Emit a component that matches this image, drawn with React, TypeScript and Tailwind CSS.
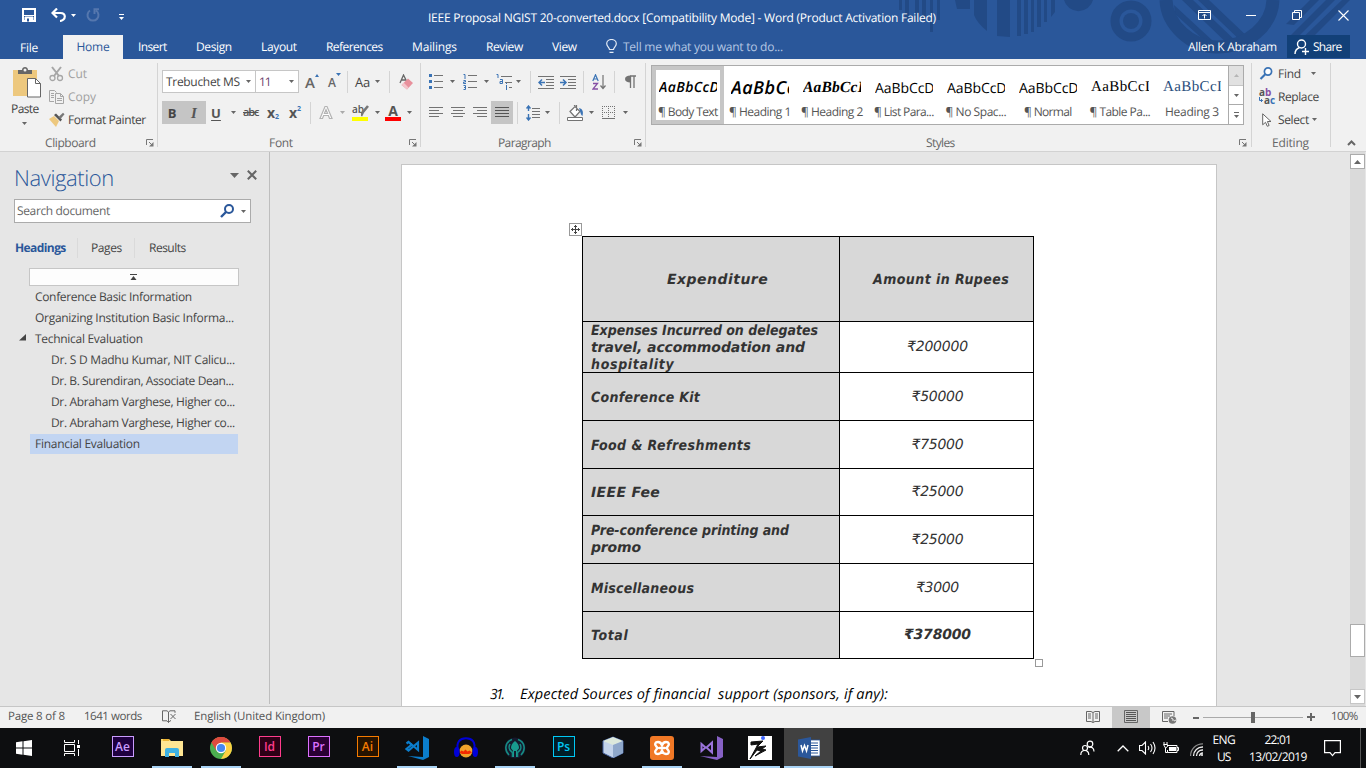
import { useLayoutEffect, useRef, useState } from "react";
import type { ReactNode } from "react";

/* Text run tracked so that it fills exactly `w` pixels. */
function T({ w, c = "", children }: { w: number; c?: string; children: string }) {
  const ref = useRef<HTMLSpanElement>(null);
  const [ls, setLs] = useState(0);
  useLayoutEffect(() => {
    const el = ref.current;
    if (!el) return;
    el.style.letterSpacing = "0px";
    const natural = el.getBoundingClientRect().width;
    const next = (w - natural) / Math.max(1, children.length - 0.5);
    el.style.letterSpacing = next + "px";
    setLs(next);
  }, [w, children]);
  return (
    <span className={"block shrink-0 whitespace-pre " + c} style={{ width: w }}>
      <span ref={ref} className="inline-block align-top [text-rendering:geometricPrecision]" style={{ letterSpacing: ls }}>
        {children}
      </span>
    </span>
  );
}

function Svg({ w, h, c = "", children }: { w: number; h: number; c?: string; children: ReactNode }) {
  return (
    <svg width={w} height={h} viewBox={`0 0 ${w} ${h}`} className={"block shrink-0 " + c} fill="none">
      {children}
    </svg>
  );
}

const Arrow = ({ c = "" }: { c?: string }) => (
  <Svg w={5} h={3} c={c}>
    <path d="M0 0h5L2.5 3z" fill="#666" />
  </Svg>
);

const Sep = ({ c = "" }: { c?: string }) => <div className={"h-[22px] w-px shrink-0 bg-[#d4d4d4] " + c} />;

const Launcher = ({ c = "" }: { c?: string }) => (
  <Svg w={8} h={8} c={c}>
    <path d="M.5 6V.5H7M3 3l3 3" stroke="#777" />
    <path d="M7.5 3v4.5H3z" fill="#777" />
  </Svg>
);

/* ---------- Title bar ---------- */

function Decor() {
  return (
    <svg width={470} height={59} viewBox="-34 0 470 59" className="absolute right-0 top-0 block" fill="none">
      <g fill="#224a86">
        <path d="M-31 0h3v10h-3zM-25 0h4v20h-4zM-15 0h4v20h-4zM-8 0h4v20h-4z" />
        <rect x="0" y="0" width="3" height="32" />
        <rect x="7" y="0" width="3" height="20" />
        <path d="M25 0h15v9H27zM44 0h13v31Q47 23 44 15zM67 0h13v37l-13-1zM87 0h4v36h-4zM94 0h4v34h-4zM101 0h3v32h-3zM107 0h4v27h-4zM114 0h3v22h-3zM121 0h4v12l-4 5zM134 0h29a15 15 0 0 1-29 0z" />
        <circle cx="201" cy="21" r="8" />
        <path d="M244 5l52 48h-8L245 14zM252 0h11l49 47-7 4zM268 0h11l42 40-6 5zM380 0h9l-25 25-8-1zM396 0h9l-36 36h-9zM412 0h8l-49 49h-10z" />
      </g>
      <circle cx="201" cy="21" r="16" stroke="#224a86" strokeWidth="9" />
      <path d="M236 0c1 25 25 47 51 47 31 0 55-22 56-47" stroke="#224a86" strokeWidth="13" />
    </svg>
  );
}

function TitleBar() {
  return (
    <div className="flex h-[35px] items-center text-[12px] text-white">
      <Svg w={14} h={14} c="ml-[22px] -mt-[5px]">
        <path d="M1 1h12v12H1z" stroke="#fff" strokeWidth="2" />
        <path d="M2 7.5h10M3 9h8v5H3z" stroke="#fff" strokeWidth="1" />
        <path d="M3 9h8v4H3z" fill="#fff" />
        <path d="M5 10.500h2v3H5z" fill="#2a579a" />
      </Svg>
      <Svg w={15} h={14} c="ml-[15px] -mt-[5px]">
        <path d="M6 .5L1.500 5 6 9.500M2 5h7.500c3 0 4.300 1.800 4.300 3.600 0 2.200-2 4.200-4.800 4.400" stroke="#fff" strokeWidth="2.200" />
      </Svg>
      <Svg w={5} h={3} c="ml-[5px] -mt-[5px]"><path d="M0 0h5L2.500 3z" fill="#fff" /></Svg>
      <Svg w={14} h={14} c="ml-[10px] -mt-[5px]">
        <path d="M4 2.500A5.500 5.500 0 1 0 10 2.500M8.500 6V1.200H13" stroke="#5577ae" strokeWidth="2" />
      </Svg>
      <Svg w={5} h={6} c="ml-[19px] -mt-[2px]"><path d="M0 .5h5" stroke="#fff" /><path d="M0 3h5L2.500 6z" fill="#fff" /></Svg>
      <T w={508} c="ml-[304px]">IEEE Proposal NGIST 20-converted.docx [Compatibility Mode] - Word (Product Activation Failed)</T>
      <Svg w={13} h={10} c="ml-[262px] -mt-[5px]">
        <path d="M.5.5h12v9H.5zM.5 2.500h12M6.500 8.500v-4M4.500 6l2-2 2 2" stroke="#fff" />
      </Svg>
      <Svg w={10} h={2} c="ml-[35px] -mt-[4px]"><path d="M0 .5h10" stroke="#fff" /></Svg>
      <Svg w={10} h={10} c="ml-[36px] -mt-[5px]"><path d="M.5 2.500h7v7h-7zM2.500 2V.5h7v7H8" stroke="#fff" /></Svg>
      <Svg w={11} h={11} c="ml-[36px] -mt-[5px]"><path d="M.5.5l10 10M10.500.5l-10 10" stroke="#fff" strokeWidth="1.100" /></Svg>
    </div>
  );
}

function Tabs() {
  return (
    <div className="flex h-6 items-center text-[12px] text-white">
      <T w={18} c="ml-[20px] mt-px">File</T>
      <div className="ml-[25px] flex h-6 w-[60px] items-center justify-center bg-[#f1f1f1] text-[#2a579a]"><T w={33}>Home</T></div>
      <T w={29} c="ml-[15px]">Insert</T>
      <T w={36} c="ml-[29px]">Design</T>
      <T w={36} c="ml-[29px]">Layout</T>
      <T w={57} c="ml-[29px]">References</T>
      <T w={45} c="ml-[29px]">Mailings</T>
      <T w={37} c="ml-[29px]">Review</T>
      <T w={25} c="ml-[29px]">View</T>
      <Svg w={11} h={14} c="ml-[29px] -mt-[2px]">
        <path d="M3.500 10.500c0-2-2.800-3-2.800-5.700a4.800 4.300 0 0 1 9.600 0c0 2.700-2.800 3.700-2.800 5.700zM3.500 13.300h4" stroke="#e4ebf5" strokeWidth="1.200" />
      </Svg>
      <T w={160} c="ml-[6px] text-[#b5c7e3]">Tell me what you want to do...</T>
      <T w={89} c="ml-[405px]">Allen K Abraham</T>
      <div className="ml-[10px] flex h-6 w-[63px] items-center border-b border-[#2a579a] bg-[#124078]">
        <Svg w={15} h={16} c="ml-[7px]">
          <circle cx="7.500" cy="5" r="4" stroke="#fff" strokeWidth="1.400" />
          <path d="M1 15c0-3 2-5.500 4.500-6.500M8 12.500h7M11.500 9v7" stroke="#fff" strokeWidth="1.400" />
        </Svg>
        <T w={29} c="ml-[4px]">Share</T>
      </div>
    </div>
  );
}

/* ---------- Ribbon ---------- */

function Group({ c, label, lw, lml, launch, children }: { c: string; label: string; lw: number; lml: string; launch?: string; children: ReactNode }) {
  return (
    <div className={"flex shrink-0 items-start " + c}>
      <div className="flex h-[92px] flex-1 flex-col">
        <div className="h-[76px]">{children}</div>
        <div className="flex h-4 items-center text-[#666]">
          <T w={lw} c={lml}>{label}</T>
          {launch && <Launcher c={launch} />}
        </div>
      </div>
      <div className="mt-1 h-[84px] w-px bg-[#d4d4d4]" />
    </div>
  );
}

function Clipboard() {
  return (
    <Group c="w-[158px]" label="Clipboard" lw={51} lml="ml-[45px]" launch="ml-[50px]">
      <div className="flex">
        <div className="flex w-[49px] flex-col items-center">
          <Svg w={28} h={31} c="ml-[5px] mt-[8px]">
            <path d="M0 3h24v26H0z" fill="#edc87e" />
            <path d="M5 3h4c0-4 6-4 6 0h4v4H5z" fill="#666" />
            <circle cx="12" cy="3" r="1.500" fill="#f1f1f1" />
            <path d="M14.500 11.500h8l5 5v13.500h-13z" fill="#fff" stroke="#666" />
            <path d="M22.500 11.500v5h5" stroke="#666" />
          </Svg>
          <T w={28} c="ml-px mt-[3px] leading-4 text-[#444]">Paste</T>
          <Arrow c="mt-[5px]" />
        </div>
        <div className="flex flex-col pt-[3px] text-[#444]">
          <div className="flex h-[23px] items-center text-[#a0a0a0]">
            <Svg w={16} h={16}>
              <path d="M3 1l7 9M12 1L5 10" stroke="#a6a6a6" strokeWidth="2" />
              <circle cx="3.500" cy="12" r="2.500" stroke="#a6a6a6" strokeWidth="1.300" />
              <circle cx="11" cy="12" r="2.500" stroke="#a6a6a6" strokeWidth="1.300" />
            </Svg>
            <T w={19} c="ml-[3px]">Cut</T>
          </div>
          <div className="flex h-[23px] items-center text-[#a0a0a0]">
            <Svg w={16} h={14}>
              <path d="M5 11.500H.5V.5h5l2 2M2 3.500h3M2 5.500h3M2 7.500h3M6.500 3.500h5l3 3v7h-8zM11.500 3.500v3h3M8 8.500h5M8 10.500h5" stroke="#a6a6a6" />
            </Svg>
            <T w={28} c="ml-[3px]">Copy</T>
          </div>
          <div className="flex h-[23px] items-center">
            <Svg w={16} h={15}>
              <path d="M0 7l5-3 5 5-3 6z" fill="#edc87e" />
              <path d="M5 3l2-1.500 6 6L11.500 9.500z" fill="#555" />
              <path d="M9.500 5L14 .8l1.500 1.500-4 4.700z" fill="#777" />
            </Svg>
            <T w={78} c="ml-[3px]">Format Painter</T>
          </div>
        </div>
      </div>
    </Group>
  );
}

function FontGroup() {
  return (
    <Group c="w-[263px]" label="Font" lw={24} lml="ml-[111px]" launch="ml-[116px]">
      <div className="flex h-[34px] items-center pl-[4px] pt-[11px] text-[#444]">
        <div className="flex h-[23px] w-[94px] items-center border border-[#c6c6c6] bg-white">
          <T w={74} c="ml-[3px]">Trebuchet MS</T><Arrow c="ml-[6px]" />
        </div>
        <div className="flex h-[23px] w-[43px] items-center border border-l-0 border-[#c6c6c6] bg-white">
          <T w={12} c="ml-[3px] text-[#6d3f6d]">11</T><Arrow c="ml-[18px]" />
        </div>
        <div className="ml-[6px] flex w-[14px] items-start"><span className="text-[15px] font-semibold leading-4 text-[#666]">A</span><Svg w={4} h={3}><path d="M0 3L2 0l2 3z" fill="#3a73b5" /></Svg></div>
        <div className="ml-[9px] flex w-[14px] items-start"><span className="mt-[2px] text-[12px] font-semibold leading-4 text-[#666]">A</span><Svg w={5} h={3}><path d="M0 0h5L2.500 3z" fill="#3a73b5" /></Svg></div>
        <Sep c="ml-[5px]" />
        <T w={15} c="ml-[7px] text-[13px]">Aa</T><Arrow c="ml-[5px]" />
        <Sep c="ml-[9px]" />
        <Svg w={15} h={16} c="ml-[9px]">
          <path d="M1 9L4.500 1 8 8M2.500 6h4" stroke="#666" strokeWidth="1.300" />
          <path d="M9 4.500l5 4.500-6 6.500L2.500 11z" fill="#e8909c" /><path d="M4.500 8.500l5 5-1.500 2L2.500 11z" fill="#f3c4ca" />
        </Svg>
      </div>
      <div className="flex h-[23px] items-center pl-[4px] mt-[8px] text-[#555]">
        <div className="flex h-[23px] w-[44px] items-center bg-[#c5c5c5] text-[13px] font-bold">
          <span className="w-[20px] text-center font-bold text-[#444]">B</span><span className="w-[24px] text-center font-['Liberation_Serif'] text-[15px] font-bold italic">I</span>
        </div>
        <span className="w-[20px] text-center text-[13px] font-bold underline underline-offset-2">U</span><Arrow c="ml-[5px]" />
        <T w={16} c="ml-[7px] text-[11px] font-semibold [&>span]:line-through">abc</T>
        <div className="ml-[8px] flex w-[14px] items-end"><span className="text-[14px] font-bold leading-4">x</span><span className="text-[7px] font-bold leading-[8px] text-[#3a73b5]">2</span></div>
        <div className="ml-[8px] flex w-[14px] items-start"><span className="text-[14px] font-bold leading-4">x</span><span className="text-[7px] font-bold leading-[8px] text-[#3a73b5]">2</span></div>
        <Sep c="ml-[7px]" />
        <Svg w={14} h={15} c="ml-[8px]"><path d="M1 13.500L6 1.500h2l5 12h-2.500L9.400 10.500H4.600L3.500 13.500zM5.400 8.500h3.200L7 4.500z" fill="#fff" stroke="#b3b3b3" strokeWidth="1.200" /></Svg>
        <Arrow c="ml-[7px] opacity-50" />
        <div className="ml-[7px] flex h-[16px] w-4 flex-col">
          <div className="flex h-[12px]"><span className="text-[10px] font-semibold leading-[9px]">ab</span><Svg w={8} h={12} c="-ml-[3px]"><path d="M7 1L2 7l-2 4" stroke="#777" strokeWidth="2.600" /></Svg></div>
          <div className="h-1 bg-[#ffff00]" />
        </div>
        <Arrow c="ml-[7px]" />
        <div className="ml-[5px] flex h-[16px] w-4 flex-col items-center">
          <span className="h-[12px] text-[14px] font-bold leading-[11px]">A</span><div className="h-1 w-4 bg-[#ff0000]" />
        </div>
        <Arrow c="ml-[6px]" />
      </div>
    </Group>
  );
}

const G = "#737373";
const B = "#3a73b5";

function ParagraphGroup() {
  return (
    <Group c="w-[225px]" label="Paragraph" lw={53} lml="ml-[77px]" launch="ml-[83px]">
      <div className="flex h-[23px] mt-[11px] items-center pl-[8px]">
        <Svg w={14} h={15}><path d="M5 1.500h9M5 7.500h9M5 13.500h9" stroke={G} /><path d="M0 0h3v3H0zM0 6h3v3H0zM0 12h3v3H0z" fill={B} /></Svg>
        <Arrow c="ml-[7px]" />
        <Svg w={14} h={16} c="ml-[8px]"><path d="M5 1.500h9M5 7.500h9M5 13.500h9" stroke={G} /><path d="M.5.5H2V5M.5 6.500h2v1.500h-2v1.500H3M.5 11.500h2v4h-2M1 13.500h1.500" stroke={B} /></Svg>
        <Arrow c="ml-[7px]" />
        <Svg w={16} h={16} c="ml-[7px]"><path d="M5 2.500h11M9 8.500h7M13 13.500h3" stroke={G} /><path d="M.5.5H2V4M4 5.500h2.500v4H4v-2h2M10.500 11v5M10.500 9v1" stroke={B} /></Svg>
        <Arrow c="ml-[4px]" /><Sep c="ml-[9px]" />
        <Svg w={16} h={14} c="ml-[7px]"><path d="M0 1.500h16M8 4.500h8M8 7.500h8M8 10.500h8M0 13.500h16" stroke={G} /><path d="M7 7.500H1M4 4.500l-3 3 3 3" stroke={B} strokeWidth="1.500" /></Svg>
        <Svg w={16} h={14} c="ml-[6px]"><path d="M0 1.500h16M8 4.500h8M8 7.500h8M8 10.500h8M0 13.500h16" stroke={G} /><path d="M0 7.500h6M3 4.500l3 3-3 3" stroke={B} strokeWidth="1.500" /></Svg>
        <Sep c="ml-[7px]" />
        <Svg w={14} h={16} c="ml-[8px]"><path d="M.8 7L3.500.8 6.200 7M1.800 5h3.400" stroke={B} strokeWidth="1.200" /><path d="M1 9.500h4.500L1 15h5" stroke="#8550a5" strokeWidth="1.300" /><path d="M11 1v13M8.500 11.500l2.500 3 2.500-3" stroke={G} strokeWidth="1.200" /></Svg>
        <Sep c="ml-[8px]" />
        <Svg w={11} h={13} c="ml-[10px]"><path d="M5 1H11M5.500 1v12M9 1v12" stroke={G} strokeWidth="1.300" /><path d="M5.500.5v7C2 7.500 0 6 0 4S2 .5 5.500.5z" fill={G} /></Svg>
      </div>
      <div className="flex h-[23px] mt-[8px] items-center pl-[8px]">
        <Svg w={14} h={11}><path d="M0 .5h14M0 3.500h10M0 6.500h14M0 9.500h10" stroke={G} /></Svg>
        <Svg w={14} h={11} c="ml-[8px]"><path d="M0 .5h14M2 3.500h10M0 6.500h14M2 9.500h10" stroke={G} /></Svg>
        <Svg w={14} h={11} c="ml-[8px]"><path d="M0 .5h14M4 3.500h10M0 6.500h14M4 9.500h10" stroke={G} /></Svg>
        <div className="ml-[4px] flex h-[23px] w-[22px] items-center justify-center bg-[#c5c5c5]"><Svg w={14} h={11}><path d="M0 .5h14M0 3.500h14M0 6.500h14M0 9.500h14" stroke="#555" /></Svg></div>
        <Sep c="ml-[4px]" />
        <Svg w={14} h={16} c="ml-[8px]"><path d="M6 3.500h8M6 6.500h8M6 9.500h8M6 12.500h8" stroke={G} /><path d="M2.500 1v5M.5 3.500l2-2.500 2 2.500M2.500 9v6M.5 12.500l2 2.500 2-2.500" stroke={B} strokeWidth="1.400" /></Svg>
        <Arrow c="ml-[5px]" /><Sep c="ml-[9px]" />
        <Svg w={17} h={16} c="ml-[7px]"><path d="M3 6.500l5-5 5 5-5 5.500zM7.500 1V0h2v6" fill="#fff" stroke={G} strokeWidth="1.200" /><path d="M12 3c4 1 4.500 4 3.500 8-1.500-.5-2-3-2.500-5z" fill={B} /><path d="M.5 12.500h15v3H.5z" fill="#fff" stroke={G} /></Svg>
        <Arrow c="ml-[5px]" />
        <Svg w={13} h={13} c="ml-[8px]"><path d="M0 .5h13M0 6.500h13M.5 0v12M6.500 0v12M12.500 0v12" stroke={G} strokeDasharray="1 1" /><path d="M0 12.500h13" stroke={G} /></Svg>
        <Arrow c="ml-[8px]" />
      </div>
    </Group>
  );
}

const STYLES = [
  { p: "AaBbCcDc", pw: 67, pc: "font-semibold italic text-[14px]", l: "¶ Body Text", w: 60 },
  { p: "AaBbCcD", pw: 77, pc: "font-semibold italic text-[18px]", l: "¶ Heading 1", w: 62 },
  { p: "AaBbCcD", pw: 66, pc: "-mt-px font-bold italic font-['Liberation_Serif'] text-[15.5px]", l: "¶ Heading 2", w: 62 },
  { p: "AaBbCcDc", pw: 66, pc: "mt-px text-[14px]", l: "¶ List Para...", w: 60 },
  { p: "AaBbCcDc", pw: 66, pc: "mt-px text-[14px]", l: "¶ No Spac...", w: 61 },
  { p: "AaBbCcDc", pw: 66, pc: "mt-px text-[14px]", l: "¶ Normal", w: 48 },
  { p: "AaBbCcDc", pw: 72, pc: "-mt-[3px] font-['Liberation_Serif'] text-[15px]", l: "¶ Table Pa...", w: 61 },
  { p: "AaBbCcDc", pw: 72, pc: "-mt-[2px] font-['Liberation_Serif'] text-[15px] text-[#2a4e7c]", l: "Heading 3", w: 54 },
];

function StylesGroup() {
  return (
    <Group c="w-[606px]" label="Styles" lw={29} lml="ml-[280px]" launch="ml-[284px]">
      <div className="ml-[5px] mt-[6px] flex h-[60px] w-[593px] border border-[#ababab] bg-white">
        {STYLES.map((s, i) => (
          <div key={s.l} className={"flex h-[58px] w-[72px] flex-col items-center pt-[10px] " + (i === 0 ? "shadow-[inset_0_0_0_4px_#c6c6c6]" : "")}>
            <div className="flex h-[24px] w-[58px] items-center overflow-hidden text-black"><T w={s.pw} c={s.pc}>{s.p}</T></div>
            <div className="flex h-[24px] items-center text-[#555]"><T w={s.w}>{s.l}</T></div>
          </div>
        ))}
        <div className="flex w-[15px] flex-col border-l border-[#ababab]">
          <div className="flex h-[20px] items-center justify-center border-b border-[#c6c6c6] bg-[#e1e1e1]"><Svg w={5} h={3}><path d="M0 3L2.500 0 5 3z" fill="#b5b5b5" /></Svg></div>
          <div className="flex h-[19px] items-center justify-center border-b border-[#ababab]"><Arrow /></div>
          <div className="flex h-[19px] flex-col items-center justify-center gap-[2px]"><div className="h-px w-[5px] bg-[#666]" /><Arrow /></div>
        </div>
      </div>
    </Group>
  );
}

function Editing() {
  return (
    <Group c="w-[79px]" label="Editing" lw={37} lml="ml-[20px]">
      <div className="flex flex-col pl-[7px] pt-[3px] text-[#444]">
        <div className="flex h-[23px] items-center">
          <Svg w={14} h={13}><circle cx="9" cy="4.500" r="3.600" fill="#fff" stroke={B} strokeWidth="1.700" /><path d="M6.500 7L1.500 12" stroke={B} strokeWidth="2.200" /></Svg>
          <T w={23} c="ml-[5px]">Find</T><Arrow c="ml-[10px]" />
        </div>
        <div className="flex h-[23px] items-center">
          <div className="-mt-[2px] flex w-[17px] flex-col text-[10px] font-bold text-[#555]">
            <span className="flex h-[8px] leading-[8px]">a<span className="text-[#8550a5]">b</span></span>
            <span className="flex h-[8px] items-center leading-[8px]"><Svg w={5} h={6}><path d="M.5 0v3.500h3M2 2l1.500 1.500L2 5" stroke={B} /></Svg>a<span className="text-[#3a73b5]">c</span></span>
          </div>
          <T w={41} c="ml-[2px]">Replace</T>
        </div>
        <div className="flex h-[23px] items-center">
          <Svg w={10} h={14} c="ml-[3px]"><path d="M.7.8v11l2.800-2.500 1.800 4 1.800-.8L5.400 8.500H9z" fill="#fff" stroke="#666" /></Svg>
          <T w={31} c="ml-[6px]">Select</T><Arrow c="ml-[3px]" />
        </div>
      </div>
    </Group>
  );
}

/* ---------- Navigation pane ---------- */

const HEADINGS = [
  { t: "Conference Basic Information", w: 157, lvl: 0 },
  { t: "Organizing Institution Basic Informa...", w: 199, lvl: 0 },
  { t: "Technical Evaluation", w: 108, lvl: 0, open: true },
  { t: "Dr. S D Madhu Kumar, NIT Calicu...", w: 184, lvl: 1 },
  { t: "Dr. B. Surendiran, Associate Dean...", w: 183, lvl: 1 },
  { t: "Dr. Abraham Varghese, Higher co...", w: 184, lvl: 1 },
  { t: "Dr. Abraham Varghese, Higher co...", w: 184, lvl: 1 },
  { t: "Financial Evaluation", w: 105, lvl: 0, sel: true },
];

function Navigation() {
  return (
    <div className="flex w-[270px] shrink-0 flex-col text-[#444]">
      <div className="flex h-[552px] flex-col border-r border-[#bebebe]">
        <div className="mt-[10px] flex h-8 items-center">
          <T w={100} c="ml-[14px] text-[22px] font-light leading-8 text-[#2a579a]">Navigation</T>
          <Svg w={9} h={5} c="ml-[116px] -mt-[6px]"><path d="M0 0h9L4.500 5z" fill="#666" /></Svg>
          <Svg w={10} h={10} c="ml-[8px] -mt-[6px]"><path d="M.8.800l8.400 8.400M9.200.800L.8 9.200" stroke="#666" strokeWidth="2" /></Svg>
        </div>
        <div className="ml-[14px] mt-[5px] flex h-6 w-[237px] items-center border border-[#ababab] bg-white">
          <T w={93} c="ml-[2px] text-[#666]">Search document</T>
          <Svg w={14} h={14} c="ml-[110px]"><circle cx="9" cy="5" r="4" stroke="#2a579a" strokeWidth="2" /><path d="M6 8l-5 5" stroke="#2a579a" strokeWidth="2.400" /></Svg>
          <Arrow c="ml-[7px]" />
        </div>
        <div className="mt-[15px] flex h-5 items-center">
          <T w={51} c="ml-[15px] font-bold text-[#2a579a]">Headings</T>
          <div className="ml-[11px] h-5 w-px bg-[#dadada]" />
          <T w={31} c="ml-[13px]">Pages</T>
          <div className="ml-[12px] h-5 w-px bg-[#dadada]" />
          <T w={37} c="ml-[14px]">Results</T>
        </div>
        <div className="ml-[29px] mt-[10px] flex h-[18px] w-[210px] items-center justify-center border border-[#c6c6c6] bg-[#fdfdfd]">
          <Svg w={7} h={6} c="mr-px"><path d="M0 .5h7" stroke="#444" /><path d="M.5 6l3-4 3 4z" fill="#444" /></Svg>
        </div>
        <div className="flex flex-col">
          {HEADINGS.map((h, i) => (
            <div key={i} className="flex h-[21px] items-center">
              <div className="w-[30px]">{h.open && <Svg w={7} h={7} c="ml-[19px] -mt-[2px]"><path d="M7 0v6.500H0z" fill="#444" /></Svg>}</div>
              <div className={"flex h-5 w-[208px] items-center " + (h.sel ? "bg-[#c2d5f2]" : "")}>
                <T w={h.w} c={h.lvl ? "ml-[21px]" : "ml-[5px]"}>{h.t}</T>
              </div>
            </div>
          ))}
        </div>
      </div>
    </div>
  );
}

/* ---------- Document ---------- */

type Line = { t: string; w: number; wide?: boolean };
const ROWS: { h: string; lines: Line[]; v: string; vw: number; total?: boolean }[] = [
  { h: "h-[51px]", lines: [{ t: "Expenses Incurred on delegates", w: 227 }, { t: "travel, accommodation and", w: 214, wide: true }, { t: "hospitality", w: 83 }], v: "₹200000", vw: 61 },
  { h: "h-[48px]", lines: [{ t: "Conference Kit", w: 109 }], v: "₹50000", vw: 52 },
  { h: "h-[48px]", lines: [{ t: "Food & Refreshments", w: 160 }], v: "₹75000", vw: 52 },
  { h: "h-[47px]", lines: [{ t: "IEEE Fee", w: 69, wide: true }], v: "₹25000", vw: 52 },
  { h: "h-[48px]", lines: [{ t: "Pre-conference printing and", w: 198 }, { t: "promo", w: 50, wide: true }], v: "₹25000", vw: 52 },
  { h: "h-[48px]", lines: [{ t: "Miscellaneous", w: 103 }], v: "₹3000", vw: 43 },
  { h: "h-[47px]", lines: [{ t: "Total", w: 37 }], v: "₹378000", vw: 67, total: true },
];

const WIDE = "font-bold italic font-['DejaVu_Sans'] text-[14px]";
const NARROW = "font-bold italic font-['DejaVu_Sans_Condensed','DejaVu_Sans'] text-[14px]";

function Page() {
  return (
    <div className="ml-[131px] mt-[12px] flex w-[816px] shrink-0 flex-col border border-b-0 border-[#c6c6c6] bg-white">
      <div className="ml-[167px] mt-[58px] flex h-[13px] w-[13px] items-center justify-center border border-[#999]">
        <Svg w={9} h={9}><path d="M4.500 0v9M0 4.500h9M3 2l1.500-1.500L6 2M3 7l1.500 1.500L6 7M2 3L.5 4.500 2 6M7 3l1.500 1.500L7 6" stroke="#444" /></Svg>
      </div>
      <div className="ml-[180px] flex w-[452px] flex-col border-l border-t border-black text-[#333]">
        <div className="flex h-[85px] border-b border-black">
          <div className="flex w-[257px] items-center border-r border-black bg-[#d8d8d8] pl-[84px] pt-[2px]"><T w={101} c={WIDE}>Expenditure</T></div>
          <div className="flex w-[194px] items-center border-r border-black bg-[#d8d8d8] pl-[33px] pt-[2px]"><T w={136} c={NARROW}>Amount in Rupees</T></div>
        </div>
        {ROWS.map((r, i) => (
          <div key={i} className={"flex overflow-hidden border-b border-black " + r.h}>
            <div className={"flex w-[257px] flex-col justify-center border-r border-black bg-[#d8d8d8] pl-[8px] " + (r.lines.length === 2 ? "pt-[2px]" : "pt-[4px]")}>
              {r.lines.map((l) => <T key={l.t} w={l.w} c={"leading-[17px] " + (l.wide ? WIDE : NARROW)}>{l.t}</T>)}
            </div>
            <div className="flex w-[194px] items-center justify-center border-r border-black pl-[2px] pt-px">
              <T w={r.vw} c={"italic font-['DejaVu_Sans'] text-[14px] " + (r.total ? "font-bold" : "")}>{r.v}</T>
            </div>
          </div>
        ))}
      </div>
      <div className="ml-[633px] h-[8px] w-[8px] border border-[#999]" />
      <div className="mt-[18px] flex h-[22px] items-center text-black">
        <T w={14} c="ml-[88px] font-['Liberation_Sans_Narrow','Open_Sans'] text-[14px] italic">31.</T>
        <T w={368} c="ml-[16px] text-[14.5px] font-medium italic">Expected Sources of financial  support (sponsors, if any):</T>
      </div>
    </div>
  );
}

function ScrollBar() {
  return (
    <div className="ml-auto mr-[1px] flex w-[15px] shrink-0 flex-col bg-[#dadada] pt-[2px]">
      <div className="flex h-[15px] items-center justify-center border border-[#ababab] bg-white"><Svg w={7} h={4}><path d="M0 4l3.500-4L7 4z" fill="#666" /></Svg></div>
      <div className="mt-[455px] h-[33px] border border-[#ababab] bg-white" />
      <div className="mt-[32px] flex h-[15px] items-center justify-center border border-[#c6c6c6] bg-white"><Svg w={7} h={4}><path d="M0 0h7L3.500 4z" fill="#666" /></Svg></div>
    </div>
  );
}

function StatusBar() {
  return (
    <div className="flex h-[22px] shrink-0 items-center border-t border-[#c6c6c6] bg-[#f1f1f1] text-[11.5px] text-[#555]">
      <T w={57} c="ml-[8px] -mt-[2px]">Page 8 of 8</T>
      <T w={58} c="ml-[19px] -mt-[2px]">1641 words</T>
      <Svg w={16} h={13} c="ml-[20px] -mt-[2px]"><path d="M6.500 2v10.500M6.500 2L5 .8H.5v10h4.500l1.500 1.700 1.500-1.700h1M6.500 2L8 .8h5v2M8.500 4l5 5M13.500 4l-5 5" stroke="#666" /></Svg>
      <T w={131} c="ml-[16px] -mt-[2px]">English (United Kingdom)</T>
      <Svg w={14} h={12} c="ml-[761px] -mt-[2px]"><path d="M7 1.500v10L5 10.500H.5V.5H5l2 1 2-1h4.500v10H9l-2 1M2 3h3M2 5h3M2 7h3M9 3h3M9 5h3M9 7h3" stroke="#666" /></Svg>
      <div className="ml-[12px] flex h-[21px] w-[38px] items-center justify-center bg-[#c8c8c8]"><Svg w={14} h={13} c="-mt-[2px]"><path d="M.5.5h13v12H.5z" stroke="#666" /><path d="M2 2.500h10M2 4.500h10M2 6.500h10M2 8.500h10M2 10.500h10" stroke="#555" /></Svg></div>
      <Svg w={15} h={13} c="ml-[12px] -mt-px"><path d="M12 5V.5H.5v10H6M2 3h8M2 5h6M2 7h4" stroke="#666" /><circle cx="10.500" cy="9" r="3.800" fill="#777" /><path d="M9 7l2 1 0 2M12 10l2-1" stroke="#eee" /></Svg>
      <div className="ml-[16px] h-[2px] w-[6px] bg-[#666]" />
      <div className="ml-[4px] flex h-[11px] w-[100px] items-center -mt-px">
        <div className="h-px w-[48px] bg-[#aaa]" /><div className="h-[11px] w-[4px] bg-[#666]" /><div className="h-px w-[48px] bg-[#aaa]" />
      </div>
      <Svg w={8} h={8} c="ml-[4px] -mt-px"><path d="M4 0v8M0 4h8" stroke="#666" strokeWidth="2" /></Svg>
      <T w={27} c="ml-[16px] -mt-[2px]">100%</T>
    </div>
  );
}

/* ---------- Taskbar ---------- */

const Adobe = ({ t, c }: { t: string; c: string }) => (
  <div className={"flex h-[21px] w-[22px] items-center justify-center border-[1.5px] text-[12px] font-semibold leading-none -mt-[3px] " + c}>{t}</div>
);

const APPS: { on?: boolean; sel?: boolean; icon: ReactNode }[] = [
  { icon: <Adobe t="Ae" c="border-[#c99cff] bg-[#1f0040] text-[#c99cff]" /> },
  {
    on: true,
    icon: <Svg w={22} h={20}><path d="M0 1h8l2 2h12v15H0z" fill="#fbd96f" /><path d="M0 3h22v15H0z" fill="#ffe693" /><path d="M2 2h6" stroke="#e9a820" strokeWidth="1.500" /><path d="M4 19v-7q0-2 2-2h10q2 0 2 2v7h-4v-4H8v4z" fill="#3fb2e3" /></Svg>,
  },
  {
    on: true,
    icon: <Svg w={22} h={22}><circle cx="11" cy="11" r="11" fill="#4caf50" /><path d="M11 11L1.500 5.500A11 11 0 0 1 20.500 5.500H11z" fill="#dd4b3e" /><path d="M11 0A11 11 0 0 0 1.500 5.500L6.500 14 11 5.500h9.500A11 11 0 0 0 11 0z" fill="#dd4b3e" /><path d="M20.500 5.500A11 11 0 0 1 11 22l4.800-8.500L11 5.500z" fill="#fdd043" /><circle cx="11" cy="11" r="5.200" fill="#fff" /><circle cx="11" cy="11" r="4.100" fill="#4688f1" /></Svg>,
  },
  { icon: <Adobe t="Id" c="border-[#ff3c8c] bg-[#2d0016] text-[#ff3c8c]" /> },
  { icon: <Adobe t="Pr" c="border-[#dd70ff] bg-[#2a0034] text-[#dd70ff]" /> },
  { icon: <Adobe t="Ai" c="border-[#f67b00] bg-[#261300] text-[#f67b00]" /> },
  { on: true, icon: <Svg w={24} h={24}><path d="M18 0l6 3v18l-6 3L3 20l15 1z" fill="#0b7dcc" /><path d="M1.500 7.500L3.500 6 13 14V6.500L3.500 14.500 1.500 13l6-5" stroke="#0b7dcc" strokeWidth="2.200" /></Svg> },
  { icon: <Svg w={24} h={22}><ellipse cx="12" cy="14" rx="6.500" ry="6.500" fill="#efa52b" /><path d="M4 13C2 5 6 1.200 12 1.200S22 5 20 13" stroke="#0000d8" strokeWidth="2" /><path d="M5.500 15.500l2-2 2 1 2-2 2 2 2-1 2.500 2-3 1.500H8z" fill="#f32a00" /><ellipse cx="2.800" cy="15" rx="2.800" ry="5" fill="#0000d8" /><ellipse cx="21.200" cy="15" rx="2.800" ry="5" fill="#0000d8" /></Svg> },
  { on: true, icon: <Svg w={22} h={22}><circle cx="11" cy="11" r="10.500" fill="#15192d" /><path d="M8 2.500C1 5 0 13 5 18M14 2.500C21 5 22 13 17 18M6 7C4 11 5 13 8.500 15.500V20M16 7c2 4 1 6-2.500 8.500V20" stroke="#168b83" strokeWidth="1.600" /><path d="M11 4c3 2 4 5 4 7 0 1-2 2-2 3v6h-1v-6h-2v6H9v-6c0-1-2-2-2-3 0-2 1-5 4-7z" fill="#189a8f" /></Svg> },
  { icon: <Adobe t="Ps" c="border-[#00c8f5] bg-[#001d26] text-[#00c8f5]" /> },
  { icon: <Svg w={22} h={22} c="-mt-[2px]"><path d="M11 1l10 4v12l-10 5-10-5V5z" fill="#c3d3ea" stroke="#45609e" /><path d="M1 5l10-4 10 4-10 4z" fill="#dce8dc" /><path d="M11 9v13l10-5V5z" fill="#8ea7ca" /></Svg> },
  { on: true, icon: <div className="flex h-6 w-6 items-center justify-center rounded-[3px] bg-[#f07826]"><Svg w={20} h={18}><path d="M10 6.500C9 3 7 3 6 3 3 3 2.500 5.500 4 7l1.500 2L4 11c-1.500 1.500-1 4 2 4 1 0 3 0 4-3.500M10 6.500C11 3 13 3 14 3c3 0 3.500 2.500 2 4l-1.500 2 1.500 2c1.500 1.500 1 4-2 4-1 0-3 0-4-3.500M7.500 9h5" stroke="#fff" strokeWidth="2.400" strokeLinecap="round" /></Svg></div> },
  { icon: <Svg w={24} h={24}><path d="M18 0l6 3v18l-6 3L1 20l17 1z" fill="#8661c5" /><path d="M2.500 8v7l4-3.500zM13 6.500v10L7.500 11.500z" stroke="#9a73da" strokeWidth="2" /></Svg> },
  { on: true, icon: <Svg w={24} h={24}><path d="M0 0h24v24H0z" fill="#fff" /><path d="M3 6l12-1-6 6 9-1-4 3 4 1-11 6 6-5-4-1-7 9 6-11 2-4-7 1z" fill="#111" stroke="#111" /><circle cx="15" cy="2" r="2" fill="#3b64ff" /></Svg> },
  { on: true, sel: true, icon: <Svg w={22} h={22}><path d="M10 3h12v16H10z" fill="#fff" stroke="#2b579a" strokeWidth=".8" /><path d="M13 6h7M13 8.500h7M13 11h7M13 13.500h7M13 16h7" stroke="#2b579a" /><path d="M0 2.500L13 0v22L0 19.500z" fill="#2b579a" /><path d="M3 8l1.500 6L6.500 8.500 8.500 14 10 8" stroke="#fff" strokeWidth="1.500" /></Svg> },
];

function Taskbar() {
  return (
    <div className="flex h-10 shrink-0 items-center bg-[#0d0e10] text-[12px] text-white">
      <Svg w={16} h={16} c="ml-4"><path d="M0 2.200L6.500 1.300v6.200H0zM7.500 1.200L16 0v7.500H7.500zM0 8.500h6.500v6.200L0 13.800zM7.500 8.500H16V16l-8.500-1.200z" fill="#fff" /></Svg>
      <Svg w={16} h={16} c="ml-8"><path d="M.5 0v2.500h10V0M.5 4.500h10v7H.5zM.5 16v-2.500h10V16M14.500 0v4M14.500 9v7" stroke="#fff" /><path d="M13 5h3v3h-3z" fill="#fff" /></Svg>
      <div className="ml-[18px] flex h-10">
        {APPS.map((a, i) => (
          <div key={i} className={"flex h-10 w-[49px] flex-col items-center " + (a.sel ? "bg-[#414141]" : "")}>
            <div className="flex h-[38px] items-center justify-center pt-[2px]">{a.icon}</div>
            {a.on && <div className={"h-[2px] bg-[#a9d3f5] " + (a.sel ? "w-[49px]" : "w-[40px]")} />}
          </div>
        ))}
      </div>
      <Svg w={15} h={16} c="ml-[247px]"><circle cx="10" cy="4" r="2.800" stroke="#fff" strokeWidth="1.200" /><circle cx="5" cy="8" r="2.500" stroke="#fff" strokeWidth="1.200" /><path d="M.8 15c0-6 8-6 8 0M8.500 7.500c3-1 5.500.5 5.500 4" stroke="#fff" strokeWidth="1.200" /></Svg>
      <Svg w={12} h={7} c="ml-[22px]"><path d="M.7 6.300L6 1l5.300 5.300" stroke="#fff" strokeWidth="1.300" /></Svg>
      <Svg w={17} h={14} c="ml-[10px]"><path d="M.5 4.500H3L6.500 1v12L3 9.500H.5zM9 5q1.500 2 0 4M11.500 3q3 4 0 8M14 1q4 6 0 12" stroke="#fff" strokeWidth="1.100" /></Svg>
      <Svg w={16} h={12} c="ml-[7px]"><path d="M5 3.500h9v7H4.500V8M14 5.500h1.500v3H14" stroke="#fff" /><path d="M6 5h7v4H6z" fill="#fff" /><path d="M1 0v2M4 0v2M.5 2.500h4v2L2.500 6zM2.500 6v4.500h2" stroke="#fff" /></Svg>
      <Svg w={13} h={13} c="ml-[11px] mt-[2px]"><path d="M.6 13A12 12 0 0 1 13 .8" stroke="#888" strokeWidth="1.200" /><path d="M3.500 13A9 9 0 0 1 13 4M6.500 13A6 6 0 0 1 13 7M9.500 13A3.500 3.500 0 0 1 13 10" stroke="#eee" strokeWidth="1.300" /><circle cx="12" cy="12" r="1" fill="#fff" /></Svg>
      <div className="ml-[9px] flex w-[24px] flex-col items-center leading-[17px]"><T w={23}>ENG</T><T w={14}>US</T></div>
      <div className="ml-[13px] flex w-[58px] flex-col items-center leading-[17px]"><T w={27}>22:01</T><T w={58}>13/02/2019</T></div>
      <Svg w={17} h={17} c="ml-[17px]"><path d="M.6.6h15.800v12H11l-2.500 3-2.500-3H.6z" stroke="#fff" strokeWidth="1.200" /></Svg>
      <div className="ml-[19px] h-10 w-px bg-[#555]" />
    </div>
  );
}

export default function App() {
  return (
    <div className="flex h-[768px] w-[1366px] flex-col overflow-hidden bg-[#e6e6e6] font-['Open_Sans','Noto_Sans',sans-serif] text-[12px] leading-4">
      <header className="relative h-[59px] shrink-0 bg-[#2a579a]">
        <Decor />
        <div className="relative">
          <TitleBar />
          <Tabs />
        </div>
      </header>
      <div className="flex h-[93px] shrink-0 border-b border-[#d2d2d2] bg-[#f1f1f1]">
        <Clipboard />
        <FontGroup />
        <ParagraphGroup />
        <StylesGroup />
        <Editing />
        <Svg w={9} h={6} c="ml-[16px] mt-[81px]"><path d="M1 5l3.500-3.500L8 5" stroke="#666" strokeWidth="2" /></Svg>
      </div>
      <main className="flex h-[554px] shrink-0 overflow-hidden">
        <Navigation />
        <Page />
        <ScrollBar />
      </main>
      <StatusBar />
      <Taskbar />
    </div>
  );
}
